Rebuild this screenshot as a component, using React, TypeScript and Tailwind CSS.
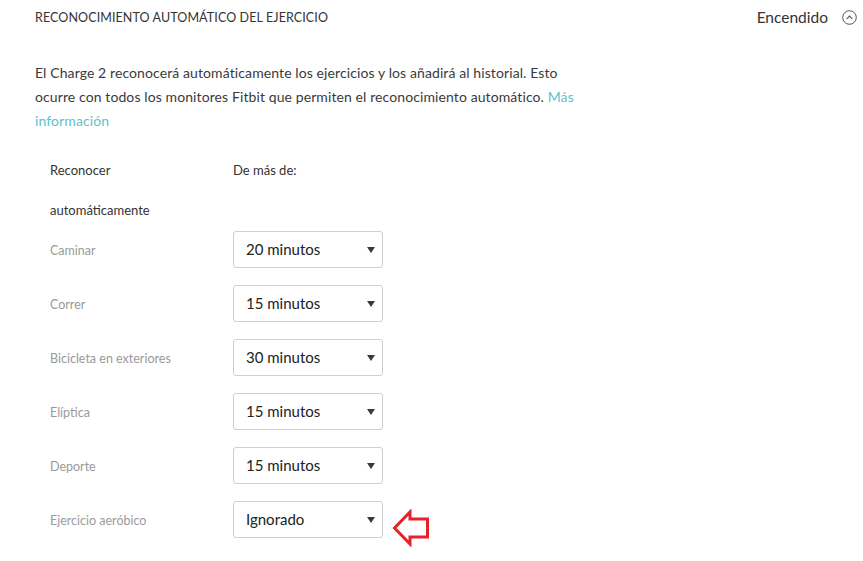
const rows = [
  { label: "Caminar", value: "20 minutos" },
  { label: "Correr", value: "15 minutos" },
  { label: "Bicicleta en exteriores", value: "30 minutos" },
  { label: "Elíptica", value: "15 minutos" },
  { label: "Deporte", value: "15 minutos" },
  { label: "Ejercicio aeróbico", value: "Ignorado" },
];

function SelectBox({ value }: { value: string }) {
  return (
    <div className="flex h-[37px] w-[150px] items-center justify-between rounded-[3px] border border-[#cfcfcf] bg-white pl-[12px] pr-[7px] text-[15px] text-[#222]">
      <span>{value}</span>
      <svg width="8" height="6" viewBox="0 0 8 6">
        <path d="M0 0 H8 L4 6 Z" fill="#3a3a3a" />
      </svg>
    </div>
  );
}

export default function App() {
  return (
    <div className="h-[561px] w-[863px] overflow-hidden bg-white font-['Lato','Liberation_Sans',sans-serif]">
      {/* header */}
      <div className="flex h-[35px] items-center justify-between pl-[35px] pr-[6px]">
        <div className="pt-[1px] text-[12.5px] tracking-[0.1px] text-[#333]">RECONOCIMIENTO AUTOMÁTICO DEL EJERCICIO</div>
        <div className="flex items-center gap-[14px]">
          <span className="text-[15.5px] text-[#333]">Encendido</span>
          <svg width="15" height="15" viewBox="0 0 15 15">
            <circle cx="7.5" cy="7.5" r="6.8" fill="none" stroke="#555" strokeWidth="1" />
            <path d="M4.8 8.8 L7.5 6 L10.2 8.8" fill="none" stroke="#555" strokeWidth="1.1" />
          </svg>
        </div>
      </div>

      {/* description */}
      <p className="mt-[26px] w-[582px] pl-[35px] text-[14px] leading-[24px] tracking-[0.1px] text-[#3a3a3a]">
        El Charge 2 reconocerá automáticamente los ejercicios y los añadirá al historial. Esto ocurre con todos los
        monitores Fitbit que permiten el reconocimiento automático. <span className="text-[#5cc3c9]">Más</span>{" "}
        <span className="text-[#5cc3c9]">información</span>
      </p>

      {/* table */}
      <div className="mt-[18px] pl-[50px]">
        <div className="flex h-[40px] items-center text-[13px] text-[#333]">
          <div className="w-[183px]">Reconocer</div>
          <div>De más de:</div>
        </div>
        <div className="flex h-[40px] items-center text-[13px] text-[#333]">automáticamente</div>
        <div className="flex flex-col gap-[17px]">
          {rows.map((r, i) => (
            <div key={r.label} className="flex h-[37px] items-center">
              <div className="w-[183px] pt-[3px] text-[12.5px] text-[#9a9a9a]">{r.label}</div>
              <SelectBox value={r.value} />
              {i === rows.length - 1 && (
                <svg className="ml-[9px] mt-[16px]" width="38" height="38" viewBox="0 0 38 38">
                  <path
                    d="M2.5 19 L18 3 V10 H35.5 V28 H18 V35 Z"
                    fill="none"
                    stroke="#e8202a"
                    strokeWidth="3"
                    strokeLinejoin="miter"
                  />
                </svg>
              )}
            </div>
          ))}
        </div>
      </div>
    </div>
  );
}
